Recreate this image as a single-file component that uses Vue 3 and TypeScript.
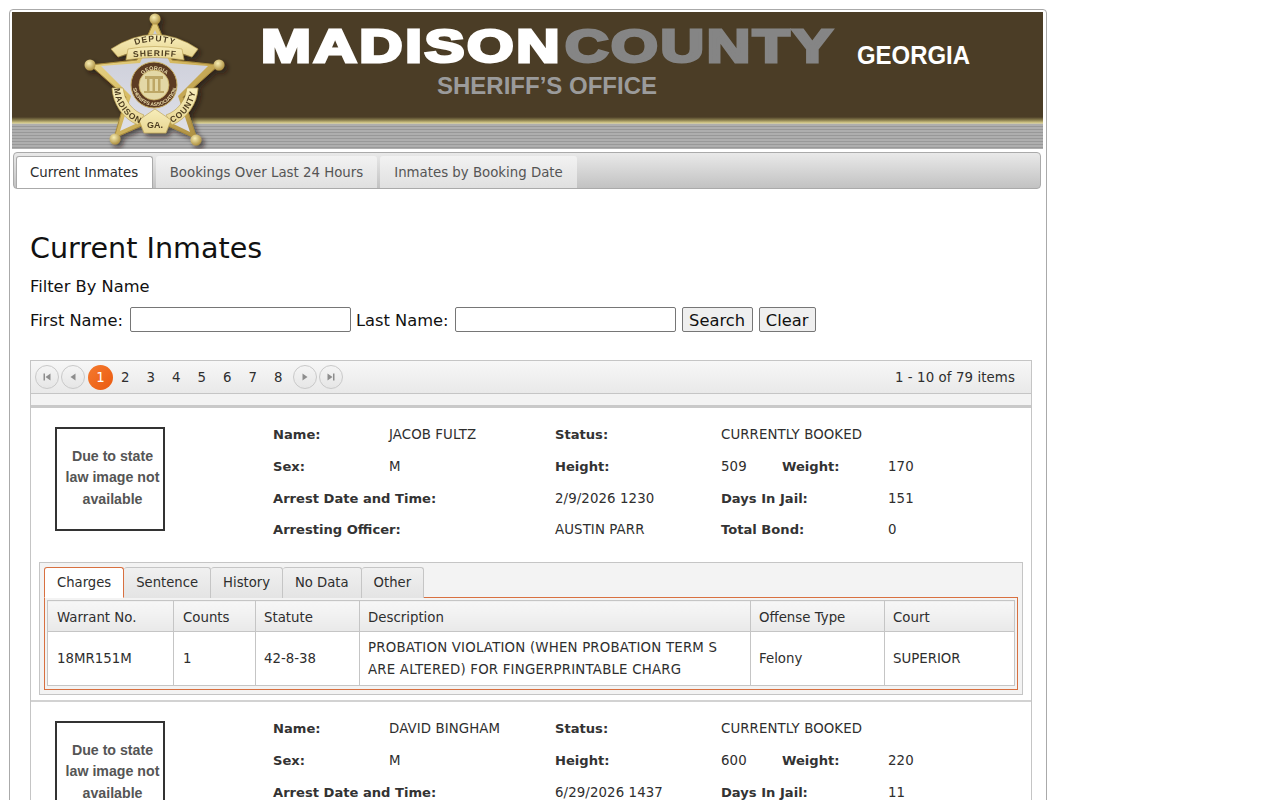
<template>
  <div class="page">
    <div class="wrapper">
      <svg class="banner" width="1031" height="137" viewBox="12 12 1031 137">
        <defs>
          <linearGradient id="band" x1="0" y1="0" x2="0" y2="1">
            <stop offset="0" stop-color="#4b3d26" />
            <stop offset="0.45" stop-color="#8c8150" />
            <stop offset="0.85" stop-color="#d8cd8c" />
            <stop offset="1" stop-color="#c9c7b4" />
          </linearGradient>
          <linearGradient id="gold" x1="0" y1="0" x2="1" y2="1">
            <stop offset="0" stop-color="#efdf98" />
            <stop offset="0.5" stop-color="#d6ba62" />
            <stop offset="1" stop-color="#a5863a" />
          </linearGradient>
          <linearGradient id="ribbon" x1="0" y1="0" x2="0" y2="1">
            <stop offset="0" stop-color="#f7edba" />
            <stop offset="1" stop-color="#e8d692" />
          </linearGradient>
          <linearGradient id="silver" x1="0" y1="0" x2="0" y2="1">
            <stop offset="0" stop-color="#c8cad6" />
            <stop offset="1" stop-color="#dfe0e8" />
          </linearGradient>
          <radialGradient id="ball" cx="0.4" cy="0.35" r="0.7">
            <stop offset="0" stop-color="#f8eeb4" />
            <stop offset="1" stop-color="#a98a3a" />
          </radialGradient>
          <filter id="shadow" x="-10%" y="-10%" width="125%" height="125%">
            <feDropShadow dx="3" dy="3" stdDeviation="2.5" flood-color="#1d160a" flood-opacity="0.65" />
          </filter>
          <path id="arcDeputy" d="M125 50 Q155 33 185 50" />
          <path id="arcSheriff" d="M128 58 Q155 54 182 58" />
          <path id="arcSeal" d="M139 80 A17 17 0 0 1 170 80" />
          <path id="arcSealLow" d="M134 76 A22 22 0 1 0 175 76" />
          <path id="arcMadison" d="M114 88 A41 41 0 0 0 141 124" />
          <path id="arcCounty" d="M169 124 A41 41 0 0 0 196 88" />
        </defs>

        <rect x="12" y="12" width="1031" height="106" fill="#4b3d26" />
        <rect x="12" y="117" width="1031" height="7" fill="url(#band)" />
        <rect x="12" y="124" width="1031" height="25" fill="#aeaeae" />
        <rect v-for="y in stripes" :key="y" x="12" :y="y" width="1031" height="1" fill="#989898" />

        <!-- badge -->
        <g filter="url(#shadow)">
          <path d="M155 19 L172 60 L219 65 L183 97 L197 139 L155 120 L114 138 L126 97 L90 65 L137 60 Z" fill="url(#gold)" stroke="#a88a3c" stroke-width="1" stroke-linejoin="round" />
          <path d="M155 30 L170 63 L208 66 L178 96 L190 132 L155 115 L120 131 L131 96 L101 66 L140 63 Z" fill="url(#silver)" />
          <circle cx="155" cy="19" r="5.5" fill="url(#ball)" />
          <circle cx="219" cy="65" r="5.5" fill="url(#ball)" />
          <circle cx="90" cy="65" r="5.5" fill="url(#ball)" />
          <circle cx="115" cy="139" r="5.5" fill="url(#ball)" />
          <circle cx="196" cy="140" r="5.5" fill="url(#ball)" />
          <path d="M111 49 Q155 20 198 49 L192 57 Q155 42 118 57 Z" fill="url(#ribbon)" stroke="#b79c4e" stroke-width="0.6" />
          <path d="M128 49 Q155 44 182 49 L184 60 Q155 55 126 60 Z" fill="url(#ribbon)" stroke="#b79c4e" stroke-width="0.6" />
          <circle cx="154" cy="85" r="23" fill="#5c3a24" stroke="#c8ad60" stroke-width="1" />
          <circle cx="154" cy="85" r="15" fill="#e3d8a6" stroke="#c8ad60" stroke-width="0.8" />
          <path d="M145 76 h18 v3 h-18 Z M147 79 h2.500 v12 h-2.500 Z M152.500 79 h2.500 v12 h-2.500 Z M158 79 h2.500 v12 h-2.500 Z M144 91 h20 v2 h-20 Z" fill="#bda766" />
          <path d="M112 88 A43 43 0 0 0 138 125 L144 115 A32 32 0 0 1 123 88 Z" fill="url(#ribbon)" stroke="#b79c4e" stroke-width="0.6" />
          <path d="M198 88 A43 43 0 0 1 172 125 L166 115 A32 32 0 0 0 187 88 Z" fill="url(#ribbon)" stroke="#b79c4e" stroke-width="0.6" />
          <path d="M155 109 L171 120 L166 133 L144 133 L139 120 Z" fill="url(#ribbon)" stroke="#b79c4e" stroke-width="0.6" />
          <text class="seal-text"><textPath href="#arcDeputy" startOffset="50%" text-anchor="middle">DEPUTY</textPath></text>
          <text class="seal-text"><textPath href="#arcSheriff" startOffset="50%" text-anchor="middle">SHERIFF</textPath></text>
          <text class="seal-small"><textPath href="#arcSeal" startOffset="50%" text-anchor="middle">GEORGIA</textPath></text>
          <text class="seal-tiny"><textPath href="#arcSealLow" startOffset="50%" text-anchor="middle">SHERIFFS ASSOCIATION</textPath></text>
          <text class="seal-ribbon"><textPath href="#arcMadison" startOffset="50%" text-anchor="middle">MADISON</textPath></text>
          <text class="seal-ribbon"><textPath href="#arcCounty" startOffset="50%" text-anchor="middle">COUNTY</textPath></text>
          <text class="seal-ga" x="155" y="128" text-anchor="middle">GA.</text>
        </g>

        <text class="logo white" x="261" y="61.500" textLength="301" lengthAdjust="spacingAndGlyphs">MADISON</text>
        <text class="logo grey" x="565" y="61.500" textLength="270" lengthAdjust="spacingAndGlyphs">COUNTY</text>
        <text class="state" x="857" y="64" textLength="113" lengthAdjust="spacingAndGlyphs">GEORGIA</text>
        <text class="office" x="437" y="94" textLength="220" lengthAdjust="spacingAndGlyphs">SHERIFF’S OFFICE</text>
      </svg>

      <nav class="main-tabs">
        <a v-for="(tab, i) in mainTabs" :key="tab" class="main-tab" :class="{ active: i === 0 }">{{ tab }}</a>
      </nav>

      <main class="content">
        <h1>Current Inmates</h1>
        <p class="filter-title">Filter By Name</p>
        <form class="filter" @submit.prevent>
          <label>First Name:</label>
          <input type="text" />
          <label class="second">Last Name:</label>
          <input type="text" />
          <button class="search">Search</button>
          <button class="clear">Clear</button>
        </form>

        <section class="grid">
          <div class="pager">
            <span class="pager-btn">
              <svg width="10" height="10" viewBox="0 0 10 10"><path d="M1.500 1.500h1.500v7H1.500zM8.500 1.500v7L3.500 5z" /></svg>
            </span>
            <span class="pager-btn">
              <svg width="10" height="10" viewBox="0 0 10 10"><path d="M7.500 1.500v7L2.500 5z" /></svg>
            </span>
            <span class="page-num current">1</span>
            <span v-for="n in [2, 3, 4, 5, 6, 7, 8]" :key="n" class="page-num">{{ n }}</span>
            <span class="pager-btn after">
              <svg width="10" height="10" viewBox="0 0 10 10"><path d="M2.500 1.500v7L7.500 5z" /></svg>
            </span>
            <span class="pager-btn">
              <svg width="10" height="10" viewBox="0 0 10 10"><path d="M1.500 1.500v7L6.500 5zM7 1.500h1.500v7H7z" /></svg>
            </span>
            <span class="pager-info">1 - 10 of 79 items</span>
          </div>
          <div class="strip"></div>

          <article v-for="inmate in inmates" :key="inmate.name" class="record">
            <div class="top">
              <div class="no-image">Due to state<br />law image not<br />available</div>
              <div class="details">
                <b>Name:</b><span>{{ inmate.name }}</span>
                <b>Status:</b><span class="wide">CURRENTLY BOOKED</span>
                <b>Sex:</b><span>{{ inmate.sex }}</span>
                <b>Height:</b><span>{{ inmate.height }}</span><b>Weight:</b><span>{{ inmate.weight }}</span>
                <b class="span2">Arrest Date and Time:</b><span>{{ inmate.arrest }}</span>
                <b class="span2b">Days In Jail:</b><span>{{ inmate.days }}</span>
                <template v-if="inmate.officer">
                  <b class="span2">Arresting Officer:</b><span>{{ inmate.officer }}</span>
                  <b class="span2b">Total Bond:</b><span>{{ inmate.bond }}</span>
                </template>
              </div>
            </div>

            <div v-if="inmate.charge" class="sub-tabs">
              <div class="sub-tab-row">
                <a v-for="(tab, i) in subTabs" :key="tab" class="sub-tab" :class="{ active: i === 0 }">{{ tab }}</a>
              </div>
              <div class="sub-panel">
                <table>
                  <thead>
                    <tr>
                      <th v-for="col in columns" :key="col.label" :style="{ width: col.width + 'px' }">{{ col.label }}</th>
                    </tr>
                  </thead>
                  <tbody>
                    <tr>
                      <td>{{ inmate.charge.warrant }}</td>
                      <td>{{ inmate.charge.counts }}</td>
                      <td>{{ inmate.charge.statute }}</td>
                      <td class="upper">PROBATION VIOLATION (WHEN PROBATION TERM S<br />ARE ALTERED) FOR FINGERPRINTABLE CHARG</td>
                      <td>{{ inmate.charge.type }}</td>
                      <td>{{ inmate.charge.court }}</td>
                    </tr>
                  </tbody>
                </table>
              </div>
            </div>
          </article>
        </section>
      </main>
    </div>
  </div>
</template>

<script setup lang="ts">
interface Charge {
  warrant: string
  counts: number
  statute: string
  type: string
  court: string
}

interface Inmate {
  name: string
  sex: string
  height: string
  weight: string
  arrest: string
  days: string
  officer?: string
  bond?: string
  charge?: Charge
}

const mainTabs = ['Current Inmates', 'Bookings Over Last 24 Hours', 'Inmates by Booking Date']
const subTabs = ['Charges', 'Sentence', 'History', 'No Data', 'Other']

const columns = [
  { label: 'Warrant No.', width: 126 },
  { label: 'Counts', width: 82 },
  { label: 'Statute', width: 104 },
  { label: 'Description', width: 391 },
  { label: 'Offense Type', width: 134 },
  { label: 'Court', width: 130 }
]

const stripes = Array.from({ length: 8 }, (_, i) => 126 + i * 3)

const inmates: Inmate[] = [
  {
    name: 'JACOB FULTZ',
    sex: 'M',
    height: '509',
    weight: '170',
    arrest: '2/9/2026 1230',
    days: '151',
    officer: 'AUSTIN PARR',
    bond: '0',
    charge: { warrant: '18MR151M', counts: 1, statute: '42-8-38', type: 'Felony', court: 'SUPERIOR' }
  },
  {
    name: 'DAVID BINGHAM',
    sex: 'M',
    height: '600',
    weight: '220',
    arrest: '6/29/2026 1437',
    days: '11'
  }
]
</script>

<style>
html,
body {
  overflow: hidden;
  background: #fff;
}
</style>

<style scoped>
.page {
  height: 800px;
  overflow: hidden;
  padding: 9px 0 0 9px;
  box-sizing: border-box;
  font-family: "DejaVu Sans", Verdana, sans-serif;
  color: #2e2e2e;
}

.wrapper {
  width: 1032px;
  min-height: 800px;
  border: 1px solid #aaa;
  border-radius: 4px;
  padding: 2px;
  background: #fff;
}

.banner {
  display: block;
}

.seal-text {
  font: bold 8.500px "Liberation Sans", sans-serif;
  letter-spacing: 1px;
  fill: #4d3d20;
}

.seal-small {
  font: bold 5.500px "Liberation Sans", sans-serif;
  fill: #e8dca8;
}

.seal-tiny {
  font: bold 5px "Liberation Sans", sans-serif;
  fill: #e8dca8;
}

.seal-ribbon {
  font: bold 8.500px "Liberation Sans", sans-serif;
  letter-spacing: 0.8px;
  fill: #4d3d20;
}

.seal-ga {
  font: bold 9px "Liberation Sans", sans-serif;
  fill: #4d3d20;
}

.logo {
  font: bold 46px "Liberation Sans", sans-serif;
  letter-spacing: 2px;
  stroke-width: 3px;
  stroke-linejoin: miter;
}

.logo.white {
  fill: #fff;
  stroke: #fff;
}

.logo.grey {
  fill: #858585;
  stroke: #858585;
}

.state {
  font: bold 25px "Liberation Sans", sans-serif;
  fill: #fff;
}

.office {
  font: bold 24px "Liberation Sans", sans-serif;
  fill: #9b9b9b;
}

.main-tabs {
  display: flex;
  gap: 3px;
  width: 1024px;
  height: 32px;
  margin: 3px 0 0 1px;
  padding: 3px 0 0 1.500px;
  border: 1px solid #aaa;
  border-radius: 4px;
  background: linear-gradient(#e9e9e9, #c2c2c2);
}

.main-tab {
  height: 32px;
  padding: 0 14px;
  font-size: 13.330px;
  line-height: 33px;
  color: #555;
  background: linear-gradient(#f2f2f2, #e0e0e0);
  border-radius: 3px 3px 0 0;
}

.main-tab.active {
  color: #2e2e2e;
  background: #fff;
  border: 1px solid #aaa;
  border-bottom: 0;
  height: 31px;
  padding: 0 13.500px;
  line-height: 31px;
}

.content {
  padding: 0 12px 0 18px;
}

h1 {
  margin: 41px 0 0;
  font-size: 28.600px;
  font-weight: 400;
  line-height: 36px;
  color: #111;
}

.filter-title {
  margin: 11px 0 0;
  font-size: 16.300px;
  line-height: 20px;
  color: #111;
}

.filter {
  display: flex;
  align-items: center;
  margin-top: 10px;
  font-size: 16.300px;
  color: #111;
}

.filter label {
  margin-right: 7px;
  padding-top: 2px;
}

.filter label.second {
  margin-left: 5px;
  margin-right: 6px;
}

.filter input {
  width: 221px;
  height: 25px;
  padding: 0;
  box-sizing: border-box;
  border: 1px solid #767676;
  border-radius: 2px;
  background: #fff;
}

.filter button {
  height: 25px;
  padding: 2px 0 0;
  font: 16.300px "DejaVu Sans", Verdana, sans-serif;
  color: #111;
  background: #efefef;
  border: 1px solid #767676;
  border-radius: 2px;
}

.search {
  width: 71px;
  margin-left: 6px;
}

.clear {
  width: 57px;
  margin-left: 6px;
}

.grid {
  margin-top: 28px;
  width: 1002px;
  box-sizing: border-box;
  border: 1px solid #c5c5c5;
  border-bottom: 0;
}

.pager {
  display: flex;
  align-items: center;
  height: 32px;
  padding-left: 4px;
  font-size: 13.330px;
  background: linear-gradient(#f7f7f7, #e9e9e9);
  border-bottom: 1px solid #c5c5c5;
}

.pager-btn {
  display: flex;
  align-items: center;
  justify-content: center;
  width: 22px;
  height: 22px;
  margin-right: 2px;
  border: 1px solid #c9c9c9;
  border-radius: 50%;
  background: linear-gradient(#f4f4f4, #e6e6e6);
}

.pager-btn.after {
  margin-left: 2px;
}

.pager-btn svg {
  fill: #8d8d8d;
}

.page-num {
  width: 25.500px;
  text-align: center;
  line-height: 25px;
  color: #2e2e2e;
}

.page-num.current {
  width: 25px;
  height: 25px;
  margin: 0 -0.500px 0 1px;
  border-radius: 50%;
  color: #fff;
  background: linear-gradient(135deg, #f57a2e, #ea5a10);
}

.pager-info {
  margin-left: auto;
  padding-right: 16px;
  letter-spacing: 0.1px;
}

.strip {
  height: 11px;
  background: #f3f3f3;
  border-bottom: 3px solid #c9c9c9;
}

.record {
  height: 292px;
  border-bottom: 2px solid #d2d2d2;
  overflow: hidden;
}

.top {
  display: flex;
  height: 154px;
  font-size: 13.330px;
}

.no-image {
  flex: none;
  width: 101px;
  height: 98px;
  margin: 19px 0 0 24px;
  padding: 0 0 2px 5px;
  border: 2px solid #333;
  font: bold 14.200px/21.500px "Liberation Sans", sans-serif;
  color: #555;
  text-align: center;
  display: flex;
  align-items: center;
  justify-content: center;
}

.details {
  display: grid;
  grid-template-columns: 116px 166px 166px 61px 106px 60px;
  grid-auto-rows: 31.670px;
  align-items: center;
  margin: 11px 0 0 108px;
  height: 127px;
}

.details b {
  font-size: 13.100px;
  font-weight: 700;
  color: #333;
}

.details span {
  color: #2e2e2e;
  letter-spacing: 0.1px;
}

.details .wide {
  grid-column: span 3;
}

.details .span2 {
  grid-column: 1 / span 2;
}

.details .span2b {
  grid-column: 4 / span 2;
}

.sub-tabs {
  margin: 0 8px;
  height: 133px;
  padding: 4px 4px 0;
  box-sizing: border-box;
  background: #f3f3f3;
  border: 1px solid #c5c5c5;
}

.sub-tab-row {
  display: flex;
  height: 31px;
  position: relative;
  z-index: 1;
}

.sub-tab {
  padding: 0 12px;
  font-size: 13.200px;
  line-height: 30px;
  color: #2e2e2e;
  background: linear-gradient(#f0f0f0, #e4e4e4);
  border: 1px solid #c5c5c5;
  border-bottom: 0;
  border-left-width: 0;
  border-radius: 3px 3px 0 0;
}

.sub-tab.active {
  background: #fff;
  border: 1px solid #d87040;
  border-bottom: 1px solid #fff;
  height: 31px;
  box-sizing: border-box;
}

.sub-panel {
  margin-top: -1px;
  height: 93px;
  box-sizing: border-box;
  border: 1px solid #d87040;
  padding: 2px;
}

table {
  width: 967px;
  table-layout: fixed;
  border-collapse: collapse;
  background: #fff;
  font-size: 13.330px;
  color: #2e2e2e;
}

th,
td {
  border: 1px solid #c5c5c5;
  padding: 0 8px;
  text-align: left;
  font-weight: 400;
  box-sizing: border-box;
}

th:nth-child(-n + 2),
td:nth-child(-n + 2) {
  padding-left: 9px;
}

th {
  height: 31px;
  padding-top: 2px;
  background: linear-gradient(#f7f7f7, #e9e9e9);
}

td {
  height: 54px;
  line-height: 22px;
}

td.upper {
  letter-spacing: 0.2px;
  white-space: nowrap;
}
</style>
